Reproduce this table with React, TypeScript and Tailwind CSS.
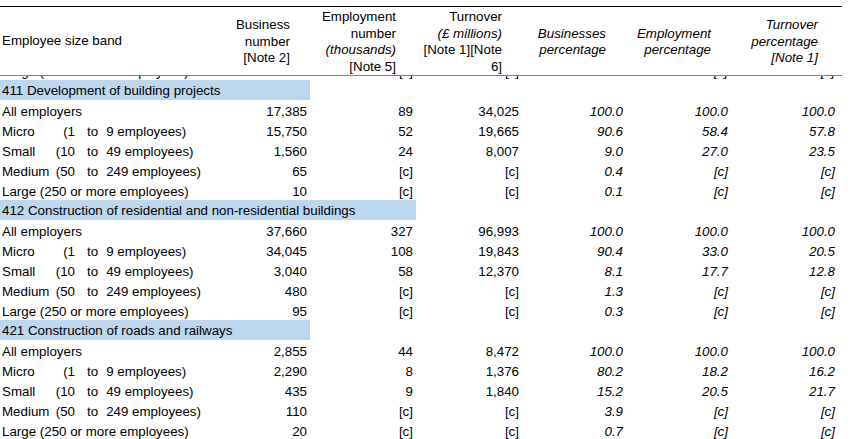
import React from "react";

type Row = {
  label: React.ReactNode;
  values: string[];
};

type Section = {
  title: string;
  span: number;
  rows: Row[];
};

const grid = "grid grid-cols-[204px_106px_106px_106px_104px_105px_107px]";

function Band({ name, lo, hi }: { name: string; lo: string; hi: string }) {
  return (
    <span className="flex whitespace-pre">
      <span className="flex w-[73px] justify-between">
        <span>{name}</span>
        <span>({lo}</span>
      </span>
      <span className="ml-[12px]">to</span>
      <span className="ml-[8px]">{hi} employees)</span>
    </span>
  );
}

const bands = (v: string[][]): Row[] => [
  { label: "All employers", values: v[0] },
  { label: <Band name="Micro" lo="1" hi="9" />, values: v[1] },
  { label: <Band name="Small" lo="10" hi="49" />, values: v[2] },
  { label: <Band name="Medium" lo="50" hi="249" />, values: v[3] },
  { label: "Large (250 or more employees)", values: v[4] },
];

const sections: Section[] = [
  {
    title: "411 Development of building projects",
    span: 2,
    rows: bands([
      ["17,385", "89", "34,025", "100.0", "100.0", "100.0"],
      ["15,750", "52", "19,665", "90.6", "58.4", "57.8"],
      ["1,560", "24", "8,007", "9.0", "27.0", "23.5"],
      ["65", "[c]", "[c]", "0.4", "[c]", "[c]"],
      ["10", "[c]", "[c]", "0.1", "[c]", "[c]"],
    ]),
  },
  {
    title: "412 Construction of residential and non-residential buildings",
    span: 3,
    rows: bands([
      ["37,660", "327", "96,993", "100.0", "100.0", "100.0"],
      ["34,045", "108", "19,843", "90.4", "33.0", "20.5"],
      ["3,040", "58", "12,370", "8.1", "17.7", "12.8"],
      ["480", "[c]", "[c]", "1.3", "[c]", "[c]"],
      ["95", "[c]", "[c]", "0.3", "[c]", "[c]"],
    ]),
  },
  {
    title: "421 Construction of roads and railways",
    span: 2,
    rows: bands([
      ["2,855", "44", "8,472", "100.0", "100.0", "100.0"],
      ["2,290", "8", "1,376", "80.2", "18.2", "16.2"],
      ["435", "9", "1,840", "15.2", "20.5", "21.7"],
      ["110", "[c]", "[c]", "3.9", "[c]", "[c]"],
      ["20", "[c]", "[c]", "0.7", "[c]", "[c]"],
    ]),
  },
];

function DataRow({ row }: { row: Row }) {
  return (
    <div className={`${grid} h-[20px] pt-[2px] leading-[20px]`}>
      <div className="pl-[2px] whitespace-nowrap">{row.label}</div>
      {row.values.map((v, i) => (
        <div key={i} className={`pr-[3px] text-right ${i >= 3 ? "italic" : ""}`}>
          {v}
        </div>
      ))}
    </div>
  );
}

function HeadCell({ children }: { children: React.ReactNode }) {
  return (
    <div className="flex items-center justify-end pt-[2px] pr-[20px] text-right leading-[16.5px] whitespace-nowrap">
      <div>{children}</div>
    </div>
  );
}

export default function App() {
  return (
    <div
      className="h-[439px] w-[850px] overflow-hidden bg-white pt-[6px] text-[13.33px] text-black"
      style={{ fontFamily: '"Liberation Sans", Arial, sans-serif' }}
    >
      <div className="w-[842px]">
        {/* frozen header */}
        <div className={`${grid} h-[70px] border-t border-b border-t-black border-b-[#808080]`}>
          <div className="flex items-center pl-[2px]">Employee size band</div>
          <HeadCell>
            Business
            <br />
            number
            <br />
            [Note 2]
          </HeadCell>
          <HeadCell>
            Employment
            <br />
            number
            <br />
            <i>(thousands)</i>
            <br />
            [Note 5]
          </HeadCell>
          <HeadCell>
            Turnover
            <br />
            <i>(£ millions)</i>
            <br />
            [Note 1][Note
            <br />
            6]
          </HeadCell>
          <HeadCell>
            <i>
              Businesses
              <br />
              percentage
            </i>
          </HeadCell>
          <HeadCell>
            <i>
              Employment
              <br />
              percentage
            </i>
          </HeadCell>
          <HeadCell>
            <i>
              Turnover
              <br />
              percentage
              <br />
              [Note 1]
            </i>
          </HeadCell>
        </div>

        {/* row scrolled under the header */}
        <div className="flex h-[4px] flex-col justify-end overflow-hidden">
          <DataRow
            row={{
              label: "Large (250 or more employees)",
              values: ["5", "[c]", "[c]", "0.0", "[c]", "[c]"],
            }}
          />
        </div>

        {sections.map((s) => (
          <div key={s.title}>
            <div className={`${grid} h-[20px]`}>
              <div
                className={`whitespace-nowrap bg-[#bdd7ee] pt-[2px] pl-[2px] leading-[18px] ${
                  s.span === 3 ? "col-span-3" : "col-span-2"
                }`}
              >
                {s.title}
              </div>
            </div>
            {s.rows.map((r, i) => (
              <DataRow key={i} row={r} />
            ))}
          </div>
        ))}
      </div>
    </div>
  );
}
